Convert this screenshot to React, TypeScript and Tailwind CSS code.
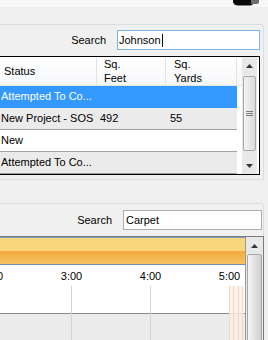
import React from "react";

const rows = [
  { s: "Attempted To Co...", f: "", y: "", bg: "bg-[#3399ff] text-white", line: "border-[#3399ff]" },
  { s: "New Project - SOS", f: "492", y: "55", bg: "bg-[#ebebeb]", line: "border-[#a0a0a0]" },
  { s: "New", f: "", y: "", bg: "bg-white", line: "border-[#a0a0a0]" },
  { s: "Attempted To Co...", f: "", y: "", bg: "bg-[#ebebeb]", line: "border-[#a0a0a0]" },
];

function UpArrow() {
  return (
    <svg width="7" height="4" viewBox="0 0 7 4">
      <path d="M3.5 0 L7 4 L0 4 Z" fill="#333" />
    </svg>
  );
}
function DownArrow() {
  return (
    <svg width="7" height="4" viewBox="0 0 7 4">
      <path d="M0 0 L7 0 L3.5 4 Z" fill="#333" />
    </svg>
  );
}

export default function App() {
  return (
    <div className="w-[268px] h-[340px] overflow-hidden bg-[#f0f0f0] font-['Liberation_Sans',Arial,sans-serif] text-[11px] text-black">
      {/* top band */}
      <div className="h-[7px] bg-[#f7f7f7] flex justify-end pr-[9px]">
        <svg width="26" height="6" viewBox="0 0 26 6">
          <path d="M0 0 H20 V3 Q20 5.5 17 5.5 H5 Q1 5.5 0 2 Z" fill="#0a0a0a" />
          <path d="M18 0 H26 V2 Q26 4 23 4 H18 Z" fill="#6e6e6e" />
        </svg>
      </div>
      <div className="h-[17px]" />

      {/* panel 1 */}
      <div className="ml-[-10px] w-[274px] h-[156px] border border-[#d5dfe5] rounded-tr-[3px] pt-[5px] pr-[3px] flex flex-col">
        <div className="flex justify-end items-center h-[20px] gap-[11px]">
          <span>Search</span>
          <div className="w-[143px] h-[20px] border border-[#7eb4ea] bg-white flex items-center pl-[1px]">
            <span>Johnson</span>
            <span className="w-px h-[13px] bg-black ml-[1px]" />
          </div>
        </div>
        <div className="h-[6px]" />
        {/* table */}
        <div className="h-[119px] border border-black bg-white flex">
          <div className="w-[250px] flex flex-col">
            <div className="h-[30px] flex border-b border-[#e3e3e3] bg-gradient-to-b from-white to-[#f6f7f9]">
              <div className="w-[105px] pl-[12px] flex items-center border-r border-[#e3e3e3]">Status</div>
              <div className="w-[69px] pl-[7px] flex flex-col justify-center leading-[14px] border-r border-[#e3e3e3]">
                <span>Sq.</span>
                <span>Feet</span>
              </div>
              <div className="w-[71px] pl-[8px] flex flex-col justify-center leading-[14px] border-r border-[#e3e3e3]">
                <span>Sq.</span>
                <span>Yards</span>
              </div>
              <div className="w-[5px]" />
            </div>
            {rows.map((r, i) => (
              <div key={i} className="flex">
                <div className={`w-[245px] h-[22px] flex items-center border-b ${r.line} ${r.bg}`}>
                  <div className="w-[105px] pl-[9px] whitespace-nowrap">{r.s}</div>
                  <div className="w-[69px] pl-[3px]">{r.f}</div>
                  <div className="w-[71px] pl-[4px]">{r.y}</div>
                </div>
              </div>
            ))}
          </div>
          {/* scrollbar */}
          <div className="w-[15px] bg-[#e8e8e8] flex flex-col items-stretch">
            <div className="h-[17px] flex items-center justify-center">
              <UpArrow />
            </div>
            <div className="h-[2px]" />
            <div className="h-[75px] mx-[1px] rounded-[2px] border border-[#a8a8a8] bg-gradient-to-r from-[#f4f4f4] to-[#dadada] flex flex-col items-center justify-center gap-[1px]">
              <span className="w-[7px] h-px bg-[#7a7a7a]" />
              <span className="w-[7px] h-px bg-[#7a7a7a]" />
              <span className="w-[7px] h-px bg-[#7a7a7a]" />
            </div>
            <div className="flex-1" />
            <div className="h-[17px] flex items-center justify-center">
              <DownArrow />
            </div>
          </div>
          <div className="w-[1px] bg-white" />
        </div>
      </div>

      <div className="h-[23px]" />

      {/* panel 2 */}
      <div className="ml-[-10px] w-[274px] h-[200px] border border-[#d5dfe5] rounded-tr-[3px] pt-[6px] pr-[1px] flex flex-col">
        <div className="flex justify-end items-center h-[20px] gap-[11px]">
          <span>Search</span>
          <div className="w-[139px] h-[20px] border border-[#abadb3] bg-white flex items-center pl-[2px]">
            <span>Carpet</span>
          </div>
        </div>
        <div className="h-[6px]" />
        {/* scheduler */}
        <div className="w-[273px] -mr-[1px] border-t border-r border-[#7b7b7b] flex h-[120px]">
          <div className="w-[254px] flex flex-col overflow-hidden">
            <div className="h-[1px] bg-[#7a9cc6]" />
            <div className="h-[13px] bg-[#f9d57d]" />
            <div className="h-[13px] bg-gradient-to-b from-[#f2aa3c] to-[#f7c362]" />
            <div className="h-[1px] bg-[#6f8fb8]" />
            <div className="h-[21px] bg-white flex ml-[-38px] items-center">
              {["2:00", "3:00", "4:00", "5:00"].map((t) => (
                <div key={t} className="w-[79px] shrink-0 text-center text-[11px] pt-[2px]">
                  {t}
                </div>
              ))}
            </div>
            <div className="flex-1 flex flex-col relative">
              <div className="h-[28px] bg-white border-b border-[#8a8a8a]" />
              <div className="flex-1 bg-[#ebebeb]" />
              <div className="absolute inset-0 flex ml-[1px]">
                <div className="w-[79px] shrink-0 border-l border-[#d3d3d3]" />
                <div className="w-[79px] shrink-0 border-l border-[#d3d3d3]" />
                <div className="w-[79px] shrink-0 border-l border-[#d3d3d3]" />
                <div className="w-[15px] shrink-0 flex bg-[#fcefe3]/80">
                  <div className="w-[4px] border-l border-[#f0d9c6]" />
                  <div className="w-[5px] border-l border-[#f0d9c6]" />
                  <div className="w-[4px] border-l border-[#f0d9c6]" />
                  <div className="w-[2px] border-l border-[#f0d9c6]" />
                </div>
              </div>
            </div>
          </div>
          {/* scheduler scrollbar */}
          <div className="flex-1 border-l border-[#9a9a9a] bg-[#e8e8e8] flex flex-col">
            <div className="h-[17px] flex items-center justify-center">
              <UpArrow />
            </div>
            <div className="flex-1 mx-[1px] rounded-[2px] border border-[#a8a8a8] bg-gradient-to-r from-[#f6f6f6] to-[#cfcfcf]" />
          </div>
        </div>
      </div>
    </div>
  );
}
